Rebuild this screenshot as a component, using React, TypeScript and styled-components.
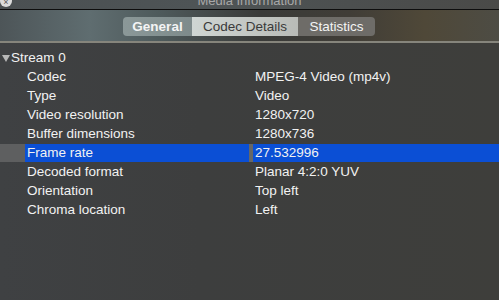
import * as React from "react";
import styled, { createGlobalStyle } from "styled-components";

const Global = createGlobalStyle`
  html, body { margin: 0; padding: 0; background: #3e3e3c; }
  body { font-family: "Liberation Sans", Arial, sans-serif; -webkit-font-smoothing: antialiased; }
`;

const Window = styled.div`
  width: 499px;
  height: 300px;
  overflow: hidden;
  display: flex;
  flex-direction: column;
  background: linear-gradient(90deg, #3f4143 0%, #3d3e3e 40%, #3e3e3b 100%);
`;

const TitleBar = styled.div`
  position: relative;
  height: 9px;
  background: linear-gradient(90deg, #4b5052 0%, #4e5456 40%, #4a4a48 100%);
  border-bottom: 1px solid #0e0e0e;
  overflow: hidden;
`;

const TitleText = styled.div`
  text-align: center;
  font-size: 13px;
  color: #a8a8a8;
  line-height: 13px;
  margin-top: -6px;
`;

const CloseDot = styled.div`
  position: absolute;
  left: 0;
  top: -5px;
  width: 12px;
  height: 12px;
  border-radius: 50%;
  background: #dcdcdc;
  display: flex;
  align-items: flex-end;
  justify-content: center;
  color: #555;
  font-size: 9px;
  line-height: 9px;
`;

const Toolbar = styled.div`
  height: 33px;
  display: flex;
  align-items: center;
  justify-content: center;
  background: linear-gradient(90deg, #4d5558 0%, #5f6d70 18%, #4e5a5b 32%, #3a3b39 52%, #403d37 70%, #4f4838 85%, #4d4c44 100%);
  border-bottom: 2px solid #86857c;
  box-sizing: border-box;
  padding-top: 1px;
`;

const Segmented = styled.div`
  display: flex;
  height: 19px;
  border-radius: 4px;
  overflow: hidden;
  margin-left: -1px;
`;

const Segment = styled.div<{ $kind: "sel" | "light" | "dark"; $w: number }>`
  width: ${p => p.$w}px;
  display: flex;
  align-items: center;
  justify-content: center;
  font-size: 13.5px;
  font-weight: ${p => (p.$kind === "sel" ? 700 : 400)};
  color: ${p => (p.$kind === "light" ? "#3a3a3a" : "#f4f4f4")};
  background: ${p =>
    p.$kind === "sel"
      ? "linear-gradient(90deg, #8b9898, #7e8b8b)"
      : p.$kind === "light"
      ? "linear-gradient(90deg, #cfd6d3, #b9bbb7)"
      : "#6e6c68"};
`;

const Content = styled.div`
  flex: 1;
  padding-top: 4px;
  display: flex;
  flex-direction: column;
`;

const Row = styled.div`
  height: 19px;
  display: grid;
  grid-template-columns: 25px 224px 4px 1fr;
  align-items: center;
  font-size: 13.5px;
`;

const Gutter = styled.div<{ $selected?: boolean }>`
  height: 18px;
  background: ${p => (p.$selected ? "#5e5f60" : "transparent")};
`;

const Cell = styled.div<{ $selected?: boolean }>`
  height: 18px;
  display: flex;
  align-items: center;
  padding-left: 2px;
  white-space: nowrap;
  color: #f2f2f2;
  background: ${p => (p.$selected ? "#0b4fd5" : "transparent")};
`;

const Divider = styled.div<{ $selected?: boolean }>`
  height: 18px;
  background: ${p => (p.$selected ? "#666768" : "transparent")};
`;

const Group = styled.div`
  height: 19px;
  display: flex;
  align-items: center;
  font-size: 13.5px;
  color: #f2f2f2;
  padding-left: 2px;
  margin-top: 1px;
`;

const Triangle = styled.svg`
  width: 8px;
  height: 7px;
  margin-right: 1px;
  margin-top: 1px;
`;

const rows: [string, string][] = [
  ["Codec", "MPEG-4 Video (mp4v)"],
  ["Type", "Video"],
  ["Video resolution", "1280x720"],
  ["Buffer dimensions", "1280x736"],
  ["Frame rate", "27.532996"],
  ["Decoded format", "Planar 4:2:0 YUV"],
  ["Orientation", "Top left"],
  ["Chroma location", "Left"],
];

export default function App() {
  return (
    <Window>
      <Global />
      <TitleBar>
        <CloseDot>×</CloseDot>
        <TitleText>Media Information</TitleText>
      </TitleBar>
      <Toolbar>
        <Segmented>
          <Segment $kind="sel" $w={69}>General</Segment>
          <Segment $kind="light" $w={106}>Codec Details</Segment>
          <Segment $kind="dark" $w={77}>Statistics</Segment>
        </Segmented>
      </Toolbar>
      <Content>
        <Group>
          <Triangle viewBox="0 0 8 7">
            <path d="M0 0 H8 L4 7 Z" fill="#b8b8b8" />
          </Triangle>
          Stream 0
        </Group>
        {rows.map(([k, v]) => {
          const sel = k === "Frame rate";
          return (
            <Row key={k}>
              <Gutter $selected={sel} />
              <Cell $selected={sel}>{k}</Cell>
              <Divider $selected={sel} />
              <Cell $selected={sel}>{v}</Cell>
            </Row>
          );
        })}
      </Content>
    </Window>
  );
}
